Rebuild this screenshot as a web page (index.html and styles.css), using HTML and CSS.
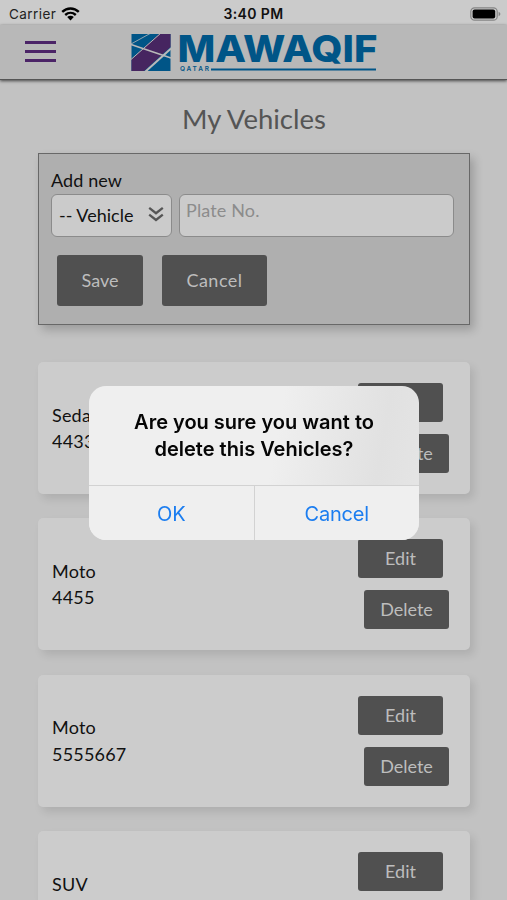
FILE: index.html
```html
<!DOCTYPE html>
<html lang="en">
<head>
  <meta charset="UTF-8" />
  <meta name="viewport" content="width=device-width, initial-scale=1" />
  <title>My Vehicles</title>
  <link rel="stylesheet" href="styles.css">
</head>
<body>
  <div class="status-bar">
    <div class="carrier">
      <span>Carrier</span>
      <svg class="wifi" width="19" height="14" viewBox="0 0 19 14">
        <path d="M1.2 4.9C6 .3 13 .3 17.8 4.9M4.2 8C7.4 5.1 11.6 5.1 14.8 8" fill="none" stroke="#000" stroke-width="2.4" />
        <path d="M6.2 10.1C8.1 8.4 10.9 8.4 12.8 10.1L9.5 13.5Z" />
      </svg>
    </div>
    <div class="clock">3:40 PM</div>
    <svg class="battery" width="31" height="14" viewBox="0 0 31 14">
      <rect x=".8" y=".8" width="26.4" height="12.4" rx="3.8" fill="none" stroke="#858585" stroke-width="1.2" />
      <rect x="2.6" y="2.6" width="22.6" height="8.8" rx="2" />
      <path d="M28.6 4.8Q30.4 5.6 30.4 7T28.6 9.2Z" fill="#858585" />
    </svg>
  </div>

  <header class="header">
    <button class="menu-button" aria-label="Menu"><span></span><span></span><span></span></button>
    <svg class="logo" width="250" height="42" viewBox="0 0 250 42">
      <path d="M.5 1H39.5V38H.5Z" fill="#005587" />
      <path d="M28 1H39.5V14L13 38H.5V26Z" fill="#462560" />
      <path d="M0 26.5L30 0" fill="none" stroke="#b9b9b9" stroke-width="1" />
      <path d="M14 39L40 15.5" fill="none" stroke="#b9b9b9" stroke-width="2" />
      <path d="M0 11.5L40 25" fill="none" stroke="#b9b9b9" stroke-width="1.5" />
      <path d="M0 11L20 0" fill="none" stroke="#b9b9b9" stroke-width=".8" />
      <text class="logo-name" x="46.5" y="28.5" textLength="200" lengthAdjust="spacingAndGlyphs">MAWAQIF</text>
      <text class="logo-city" x="49" y="38" textLength="29" lengthAdjust="spacing">QATAR</text>
      <path d="M80 36.5H245" stroke="#005587" stroke-width="2.2" />
    </svg>
  </header>

  <main class="page">
    <h1>My Vehicles</h1>

    <form class="add-form">
      <div class="form-label">Add new</div>
      <div class="fields">
        <div class="select">
          <span>-- Vehicle</span>
          <svg width="16" height="17" viewBox="0 0 16 17">
            <path d="M1.2 1.8L8 7.2L14.8 1.8M1.2 8.6L8 14L14.8 8.6" fill="none" stroke="#555" stroke-width="2.3" />
          </svg>
        </div>
        <div class="plate">Plate No.</div>
      </div>
      <div class="form-buttons">
        <button type="button" class="btn save">Save</button>
        <button type="button" class="btn cancel">Cancel</button>
      </div>
    </form>

    <div class="card">
      <div class="vehicle">Sedan<br>4433</div>
      <div class="actions">
        <button class="btn edit">Edit</button>
        <button class="btn delete">Delete</button>
      </div>
    </div>
    <div class="card">
      <div class="vehicle">Moto<br>4455</div>
      <div class="actions">
        <button class="btn edit">Edit</button>
        <button class="btn delete">Delete</button>
      </div>
    </div>
    <div class="card">
      <div class="vehicle">Moto<br>5555667</div>
      <div class="actions">
        <button class="btn edit">Edit</button>
        <button class="btn delete">Delete</button>
      </div>
    </div>
    <div class="card last">
      <div class="vehicle">SUV</div>
      <div class="actions">
        <button class="btn edit">Edit</button>
      </div>
    </div>
  </main>

  <div class="alert" role="alertdialog">
    <div class="alert-title">Are you sure you want to<br>delete this Vehicles?</div>
    <div class="alert-buttons">
      <button>OK</button>
      <button>Cancel</button>
    </div>
  </div>
</body>
</html>
```
FILE: styles.css
```css
* {
  box-sizing: border-box;
}

body {
  margin: 0;
  height: 900px;
  overflow: hidden;
  background: #c2c2c2;
  color: #111;
  font-family: Futura, Lato, sans-serif;
  font-size: 18px;
}

button {
  border: none;
  padding: 0;
  font-family: inherit;
  cursor: pointer;
}

.status-bar {
  display: grid;
  grid-template-columns: 1fr auto 1fr;
  align-items: center;
  height: 25px;
  padding: 2px 6px 0 9px;
  background: #cbcbcb;
  font-family: Inter, sans-serif;
  font-size: 13px;
}

.carrier {
  display: flex;
  align-items: center;
  gap: 5px;
  color: #222;
  font-size: 13.5px;
  letter-spacing: 0.45px;
}

.clock {
  margin-right: 3px;
  color: #111;
  font-size: 14px;
  font-weight: 600;
  letter-spacing: 0.4px;
}

.battery {
  justify-self: end;
}

.header {
  display: flex;
  align-items: flex-start;
  height: 55px;
  padding: 8px 25px 0;
  background: #b8b8b8;
  border-bottom: 1px solid #555;
  box-shadow: 0 1px 3px #444;
}

.menu-button {
  display: flex;
  flex-direction: column;
  gap: 6px;
  width: 31px;
  margin: 8px 75px 0 0;
  background: none;
}

.menu-button span {
  height: 3px;
  background: #4b2467;
}

.logo {
  overflow: visible;
}

.logo-name {
  fill: #005587;
  font: 800 37.5px Inter, sans-serif;
}

.logo-city {
  fill: #005587;
  font: 600 6.5px Inter, sans-serif;
}

.page {
  height: 820px;
  overflow: hidden;
  padding: 0 37px 0 38px;
}

h1 {
  margin: 0;
  padding-top: 22px;
  height: 73px;
  color: #555;
  font-size: 27.5px;
  font-weight: 400;
  line-height: 34px;
  text-align: center;
}

.add-form {
  height: 172px;
  margin-bottom: 37px;
  padding: 15px 15px 0 12px;
  background: #afafaf;
  border: 1px solid #686868;
  box-shadow: 4px 5px 9px rgba(0, 0, 0, 0.2);
}

.form-label {
  height: 25px;
  line-height: 22px;
  letter-spacing: 0.1px;
}

.fields {
  display: flex;
  gap: 7px;
}

.select,
.plate {
  height: 43px;
  background: #cbcbcb;
  border: 1px solid #8b8b8b;
  border-radius: 6px;
}

.select {
  display: flex;
  align-items: center;
  justify-content: space-between;
  width: 121px;
  padding: 0 7px 2px;
}

.plate {
  flex: 1;
  padding: 4px 6px;
  color: #8c8c8c;
  line-height: 22px;
  letter-spacing: 0.15px;
}

.form-buttons {
  display: flex;
  gap: 19px;
  padding: 18px 6px;
}

.btn {
  width: 85px;
  height: 39px;
  padding-bottom: 1px;
  background: #505050;
  border-radius: 3px;
  color: #bdbdbd;
  font-size: 18px;
}

.save,
.cancel {
  height: 51px;
  padding-bottom: 2px;
}

.save {
  width: 86px;
}

.cancel {
  width: 105px;
  letter-spacing: 0.5px;
}

.card {
  display: flex;
  justify-content: space-between;
  height: 132px;
  margin-bottom: 24.4px;
  padding: 21px 21px 0 14px;
  background: #ccc;
  border-radius: 5px;
  box-shadow: 4px 5px 9px rgba(0, 0, 0, 0.1);
}

.last {
  height: 69px;
  margin-bottom: 0;
  border-radius: 5px 5px 0 0;
}

.vehicle {
  padding-top: 18.5px;
  line-height: 26.5px;
  letter-spacing: 0.2px;
}

.actions {
  display: flex;
  flex-direction: column;
  align-items: flex-end;
  gap: 12px;
}

.edit {
  margin-right: 6px;
}

.alert {
  position: fixed;
  left: 89px;
  top: 386px;
  width: 330px;
  height: 154px;
  overflow: hidden;
  background: linear-gradient(100deg, #efefef 55%, #e1e1e1 85%, #e5e5e5);
  border-radius: 17px;
  color: #050505;
  font-family: Inter, sans-serif;
}

.alert-title {
  height: 99px;
  padding-top: 23px;
  font-size: 20px;
  font-weight: 600;
  line-height: 27px;
  text-align: center;
}

.alert-buttons {
  display: flex;
  height: 55px;
  background: #efefef;
  border-top: 1px solid #d2d2d2;
}

.alert-buttons button {
  flex: 1;
  padding-top: 2px;
  background: none;
  color: #1b7df0;
  font-size: 20px;
  letter-spacing: -0.2px;
}

.alert-buttons button + button {
  border-left: 1px solid #d2d2d2;
}
```
